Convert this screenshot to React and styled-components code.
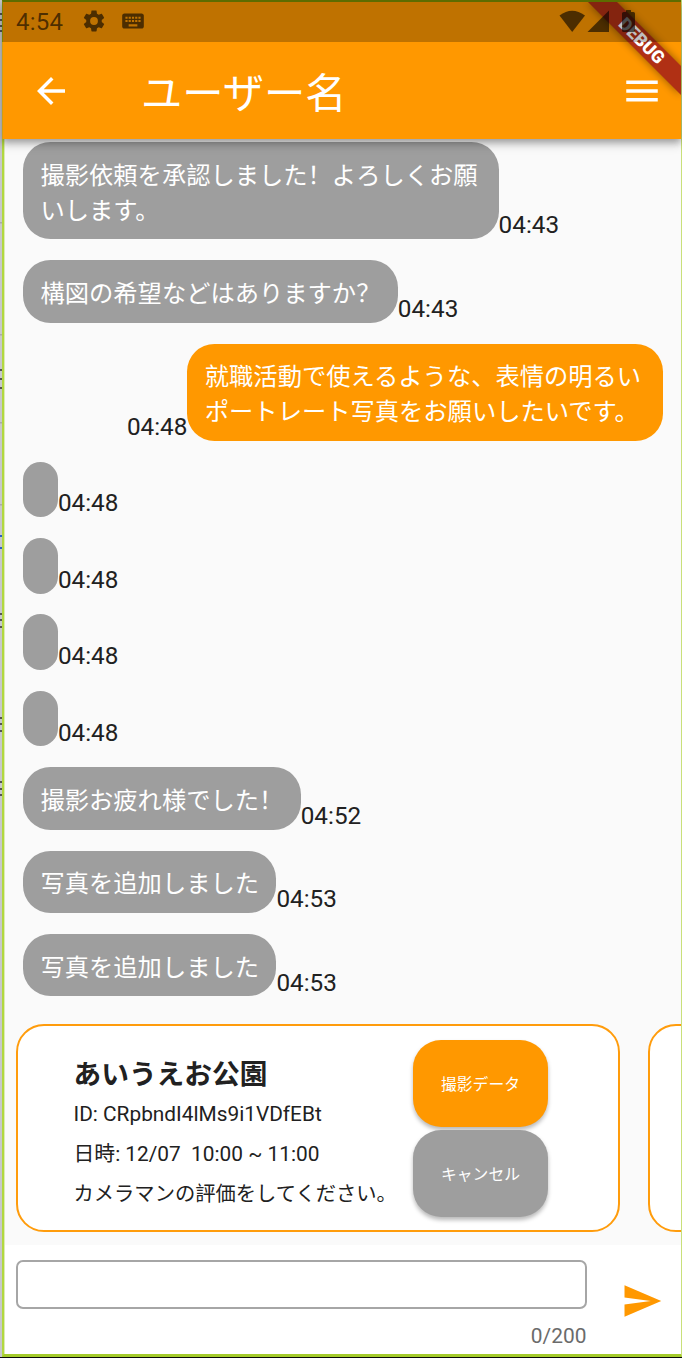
import React from "react";
import styled, { createGlobalStyle } from "styled-components";

const Global = createGlobalStyle`
  * { box-sizing: border-box; }
  body { margin: 0; background: #fafafa; }
`;

const Screen = styled.div`
  width: 682px;
  height: 1358px;
  display: flex;
  overflow: hidden;
  position: relative;
  border-bottom: 1px solid #0a0a0a;
  font-family: Roboto, "Noto Sans CJK SC", sans-serif;
  color: #212121;
`;

const Strip = styled.svg`
  flex: none;
  background: #c8c8cb;
`;

const Phone = styled.div`
  flex: 1;
  min-width: 0;
  display: flex;
  flex-direction: column;
  border-left: 2px solid #b2d83f;
  border-right: 1px solid #c9e07a;
  border-bottom: 3px solid #a4cb2b;
  background: #fafafa;
  box-shadow: inset 1px 0 #dcebb4;
`;

const StatusBar = styled.div`
  height: 42px;
  flex: none;
  margin-left: -2px;
  border-top: 2px solid #5d6c00;
  border-left: 1px solid #7d8400;
  background: rgba(0, 0, 0, 0.25);
  color: rgba(0, 0, 0, 0.6);
  display: flex;
  align-items: center;
  padding: 0 42px 0 13px;
  font-size: 24px;
  position: relative;
  z-index: 3;
`;

const Clock = styled.span`
  width: 65px;
  letter-spacing: 0.2px;
`;

const StatusIcon = styled.svg`
  flex: none;
  margin: 0 0 2px ${(p) => p.$gap || 0}px;
`;

const Spacer = styled.div`
  flex: 1;
`;

const AppBar = styled.header`
  height: 139px;
  flex: none;
  margin: -42px 0 0 -2px;
  border-left: 1px solid #d0a010;
  background: #ff9800;
  box-shadow: 0 3px 7px rgba(0, 0, 0, 0.3), 0 7px 9px rgba(0, 0, 0, 0.12);
  color: #fff;
  display: flex;
  align-items: center;
  padding: 42px 18px 0 27px;
  position: relative;
  z-index: 1;
`;

const Title = styled.h1`
  margin: 7px 0 0 69px;
  flex: 1;
  font-size: 41.3px;
  font-weight: 400;
  line-height: 60px;
`;

const Ribbon = styled.svg`
  position: absolute;
  top: 2px;
  right: 1px;
  z-index: 2;
`;

const Messages = styled.main`
  flex: 1;
  min-height: 0;
  padding: 3.1px 18.1px 0 19.1px;
  display: flex;
  flex-direction: column;
  gap: 20.9px;
`;

const Message = styled.div`
  display: flex;
  align-items: flex-end;
  flex-direction: ${(p) => (p.$mine ? "row-reverse" : "row")};
`;

const Bubble = styled.div`
  flex: none;
  min-height: 55.5px;
  width: ${(p) => (p.$wide ? "475.5px" : "auto")};
  padding: ${(p) => (p.$empty ? "0 17.4px" : "16.9px 17.4px 10.9px")};
  border-radius: 27.5px;
  background: ${(p) => (p.$mine ? "#ff9800" : "#9e9e9e")};
  color: #fff;
  font-size: 24.29px;
  line-height: 34.7px;
  white-space: pre-line;
`;

const Time = styled.time`
  font-size: 24.29px;
  line-height: 27.8px;
`;

const Cards = styled.section`
  height: 221px;
  flex: none;
  padding-left: 12px;
  display: flex;
  gap: 28px;
  overflow: hidden;
`;

const Card = styled.article`
  width: 603.5px;
  height: 208px;
  flex: none;
  border: 2px solid #ff9c0c;
  border-radius: 28px;
  background: #fff;
  padding: 14px 0 0 55.5px;
  display: flex;
`;

const Details = styled.div`
  width: 339.5px;
  padding-top: 14px;
`;

const Place = styled.h2`
  margin: 0;
  font-size: 27.7px;
  line-height: 41px;
  font-weight: 700;
  margin-bottom: -1px;
`;

const Detail = styled.p`
  margin: 0;
  font-size: ${(p) => (p.$note ? "20.3px" : "20.83px")};
  line-height: 40px;
  white-space: pre;
`;

const Actions = styled.div`
  display: flex;
  flex-direction: column;
  gap: 3.6px;
`;

const Action = styled.button`
  width: 135px;
  height: 86.6px;
  border: 0;
  padding: 0;
  border-radius: 28px;
  background: ${(p) => (p.$primary ? "#ff9800" : "#9e9e9e")};
  box-shadow: 0 3px 4px rgba(0, 0, 0, 0.28);
  color: #fff;
  font: 400 15.8px Roboto, "Noto Sans CJK SC", sans-serif;
`;

const Composer = styled.footer`
  height: 109px;
  flex: none;
  background: #fff;
  box-shadow: inset 1px 0 #dcebb4;
  padding: 15px 18px 0 12px;
  display: flex;
  justify-content: space-between;
`;

const Field = styled.div`
  width: 571px;
`;

const Input = styled.input`
  display: block;
  width: 100%;
  height: 49px;
  border: 2px solid #a6a6a6;
  border-radius: 7px;
  background: #fff;
  outline: 0;
`;

const Counter = styled.div`
  margin-top: 15px;
  padding-right: 0.6px;
  text-align: right;
  font-size: 20.9px;
  line-height: 25px;
  color: #6b6b6b;
`;

const Send = styled.svg`
  margin-top: 20px;
`;

const messages = [
  { text: "撮影依頼を承認しました！よろしくお願\nいします。", time: "04:43", wide: true },
  { text: "構図の希望などはありますか？", time: "04:43" },
  { text: "就職活動で使えるような、表情の明るい\nポートレート写真をお願いしたいです。", time: "04:48", wide: true, mine: true },
  { text: "", time: "04:48" },
  { text: "", time: "04:48" },
  { text: "", time: "04:48" },
  { text: "", time: "04:48" },
  { text: "撮影お疲れ様でした！", time: "04:52" },
  { text: "写真を追加しました", time: "04:53" },
  { text: "写真を追加しました", time: "04:53" },
];

const edgeMarks = [13, 19, 25, 30, 369, 378, 387, 613, 619, 626, 717, 723, 730, 781, 788, 794];
const edgeRules = [222, 334, 422, 504];
const edgeLinks = [535, 547];

export default function App() {
  return (
    <Screen lang="zh-Hans">
      <Global />
      <Strip width="2" height="1357">
        {edgeRules.map((y) => <rect key={y} y={y} width="2" height="1.500" fill="#aaa" />)}
        {edgeMarks.map((y) => <rect key={y} y={y} width="2" height="2" fill="#555" />)}
        {edgeLinks.map((y) => <rect key={y} y={y} width="2" height="2" fill="#2a5fc8" />)}
      </Strip>
      <Phone>
        <StatusBar>
          <Clock>4:54</Clock>
          <StatusIcon width="26" height="26" viewBox="0 0 24 24" fill="currentColor">
            <path d="M19.14 12.94c.04-.3.06-.61.06-.94 0-.32-.02-.64-.07-.94l2.03-1.58c.18-.14.23-.41.12-.61l-1.92-3.32c-.12-.22-.37-.29-.59-.22l-2.39.96c-.5-.38-1.03-.7-1.62-.94l-.36-2.54c-.04-.24-.24-.41-.48-.41h-3.84c-.24 0-.43.17-.47.41l-.36 2.54c-.59.24-1.13.57-1.62.94l-2.39-.96c-.22-.08-.47 0-.59.22L2.74 8.87c-.12.21-.08.47.12.61l2.03 1.58c-.05.3-.09.63-.09.94s.02.64.07.94l-2.03 1.58c-.18.14-.23.41-.12.61l1.92 3.32c.12.22.37.29.59.22l2.39-.96c.5.38 1.03.7 1.62.94l.36 2.54c.05.24.24.41.48.41h3.84c.24 0 .44-.17.47-.41l.36-2.54c.59-.24 1.13-.56 1.62-.94l2.39.96c.22.08.47 0 .59-.22l1.92-3.32c.12-.22.07-.47-.12-.61l-2.01-1.58zM12 15.6A3.6 3.6 0 1 1 12 8.4a3.6 3.6 0 0 1 0 7.2z" />
          </StatusIcon>
          <StatusIcon $gap={12.5} width="26" height="26" viewBox="0 0 24 24" fill="currentColor">
            <path d="M20 5H4c-1.1 0-1.99.9-1.99 2L2 17c0 1.1.9 2 2 2h16c1.1 0 2-.9 2-2V7c0-1.1-.9-2-2-2zm-9 3h2v2h-2V8zm0 3h2v2h-2v-2zM8 8h2v2H8V8zm0 3h2v2H8v-2zm-1 2H5v-2h2v2zm0-3H5V8h2v2zm9 7H8v-2h8v2zm0-4h-2v-2h2v2zm0-3h-2V8h2v2zm3 3h-2v-2h2v2zm0-3h-2V8h2v2z" />
          </StatusIcon>
          <Spacer />
          <StatusIcon width="80" height="26" viewBox="0 0 80 26" fill="currentColor">
            <path d="M0.500 7.500Q13-2 26 7.500L13.200 24Z" />
            <path d="M28.500 24L50 2.500V24Z" />
            <path d="M67 4V2.500Q67 2 67.500 2H71.500Q72 2 72 2.500V4H74.500Q76 4 76 5.500V22.500Q76 24 74.500 24H64.500Q63 24 63 22.500V5.500Q63 4 64.500 4Z" />
          </StatusIcon>
        </StatusBar>
        <AppBar>
          <svg width="42" height="42" viewBox="0 0 24 24" fill="currentColor">
            <path d="M20 11H7.830l5.590-5.590L12 4l-8 8 8 8 1.410-1.410L7.830 13H20v-2z" />
          </svg>
          <Title>ユーザー名</Title>
          <svg width="42" height="42" viewBox="0 0 24 24" fill="currentColor">
            <path d="M3 18h18v-2H3v2zm0-5h18v-2H3v2zm0-7v2h18V6H3z" />
          </svg>
        </AppBar>
        <Messages>
          {messages.map((m, i) => (
            <Message key={i} $mine={m.mine}>
              <Bubble $mine={m.mine} $wide={m.wide} $empty={!m.text}>{m.text}</Bubble>
              <Time>{m.time}</Time>
            </Message>
          ))}
        </Messages>
        <Cards>
          <Card>
            <Details>
              <Place>あいうえお公園</Place>
              <Detail>ID: CRpbndI4lMs9i1VDfEBt</Detail>
              <Detail>{"日時: 12/07  10:00 ~ 11:00"}</Detail>
              <Detail $note>カメラマンの評価をしてください。</Detail>
            </Details>
            <Actions>
              <Action $primary>撮影データ</Action>
              <Action>キャンセル</Action>
            </Actions>
          </Card>
          <Card />
        </Cards>
        <Composer>
          <Field>
            <Input maxLength={200} />
            <Counter>0/200</Counter>
          </Field>
          <Send width="42" height="42" viewBox="0 0 24 24" fill="#ff9800">
            <path d="M2.010 21L23 12 2.010 3 2 10l15 2-15 2z" />
          </Send>
        </Composer>
      </Phone>
      <Ribbon width="110" height="110" viewBox="0 0 110 110">
        <defs>
          <filter id="ribbonShadow" x="-20%" y="-20%" width="140%" height="140%">
            <feGaussianBlur stdDeviation="4" />
          </filter>
        </defs>
        <path d="M17 0H46L110 64V93Z" fill="#000" opacity="0.45" filter="url(#ribbonShadow)" />
        <path d="M17 0H46L110 64V93Z" fill="#b03014" />
        <text x="0" y="0" transform="translate(71 38.500) rotate(45)" textAnchor="middle" dy="6.500" fontFamily="Roboto" fontWeight="900" fontSize="17.700" fill="#fff">DEBUG</text>
      </Ribbon>
    </Screen>
  );
}
